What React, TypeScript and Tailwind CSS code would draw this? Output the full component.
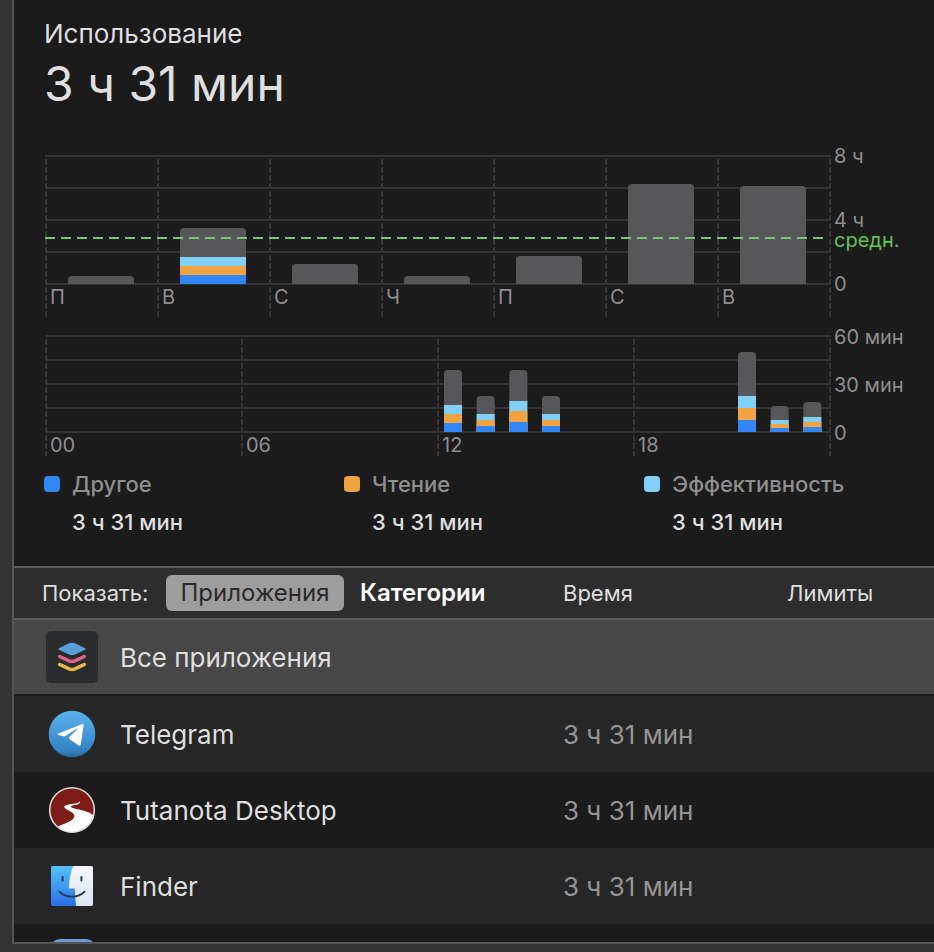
import { useState, type ReactNode } from "react";

const BLUE = "#3287f7";
const ORANGE = "#f2a341";
const SKY = "#82cff8";
const GRAY = "#575759";
const GRID = "#343434";

/* stack: heights above the baseline of the blue, orange and sky segments */
type Bar = { slot: number; height: number; stack?: [number, number, number] };

type ChartProps = {
  label: string;
  plot: number;
  step: number;
  footer: number;
  slots: number;
  barWidth: number;
  barOffset: number;
  ticks: string[];
  bars: Bar[];
  average?: number;
  children: ReactNode;
};

const pct = (n: number) => `${n * 100}%`;

function Chart({ label, plot, step, footer, slots, barWidth, barOffset, ticks, bars, average, children }: ChartProps) {
  const rows = Array.from({ length: plot / step + 1 }, (_, i) => i * step);
  return (
    <div className="flex gap-1">
      <div className="min-w-0 flex-1">
        <svg role="img" aria-label={label} className="block w-full overflow-visible" height={plot + footer}>
          {rows.map((y) => (
            <line key={y} x1="0" x2="100%" y1={y + 1} y2={y + 1} stroke={GRID} strokeWidth="2" strokeLinecap="square" />
          ))}
          {Array.from({ length: ticks.length + 1 }, (_, i) => (
            <line
              key={i}
              x1={pct(i / ticks.length)}
              x2={pct(i / ticks.length)}
              y1="4"
              y2={plot + footer}
              stroke={GRID}
              strokeWidth="2"
              strokeDasharray="6 2"
            />
          ))}
          <svg x="0" y="0" width="100%" height={plot + 1}>
            {bars.map((b) => {
              const x = pct((b.slot + barOffset) / slots);
              const w = pct(barWidth / slots);
              const base = plot + 1;
              return (
                <g key={b.slot}>
                  <rect x={x} width={w} y={base - b.height} height={b.height + 8} rx={4} fill={GRAY} />
                  {b.stack && (
                    <>
                      <rect x={x} width={w} y={base - b.stack[2]} height={b.stack[2]} fill={SKY} />
                      <rect x={x} width={w} y={base - b.stack[1]} height={b.stack[1]} fill={ORANGE} />
                      <rect x={x} width={w} y={base - b.stack[0]} height={b.stack[0]} fill={BLUE} />
                    </>
                  )}
                </g>
              );
            })}
          </svg>
          {average !== undefined && (
            <line x1="-1" x2="99.5%" y1={average} y2={average} stroke="#7cc576" strokeWidth="2" strokeDasharray="10 6" />
          )}
          {ticks.map((t, i) => (
            <svg key={i} x={pct(i / ticks.length)} y={plot} overflow="visible">
              <text x="4" y="21" fontSize="20" fill="#8e8e8e">
                {t}
              </text>
            </svg>
          ))}
        </svg>
      </div>
      <div className="w-21 shrink-0 text-xl leading-5 whitespace-nowrap text-[#8e8e8e]">{children}</div>
    </div>
  );
}

function Legend({ swatch, name }: { swatch: string; name: string }) {
  return (
    <div className="w-[300px] shrink-0">
      <dt className="flex h-8 items-center gap-3 text-[#8e8e8e]">
        <span className={`size-4 rounded ${swatch}`} />
        {name}
      </dt>
      <dd className="mt-2 pl-7 leading-7 text-[#dfdfdf]">3 ч 31 мин</dd>
    </div>
  );
}

function AllAppsIcon() {
  return (
    <svg className="size-[52px]" viewBox="0 0 52 52" aria-hidden="true">
      <rect width="52" height="52" rx="5" fill="#2a2b2d" />
      <g fill="none" strokeWidth="3.6" strokeLinecap="round">
        <path d="M13.8 33.5L22.6 37.7Q26 39.2 29.4 37.7L38.2 33.5" stroke="#edb748" />
        <path d="M13.8 25.5L22.6 29.7Q26 31.2 29.4 29.7L38.2 25.5" stroke="#e0608a" />
      </g>
      <path d="M13.4 16.9L23 12.3Q26 11 29 12.3L38.6 16.9Q40.6 18 38.6 19.1L29 23.6Q26 24.9 23 23.6L13.4 19.1Q11.4 18 13.4 16.9Z" fill="#5b9fd8" />
    </svg>
  );
}

function TelegramIcon() {
  return (
    <svg className="size-[52px]" viewBox="0 0 52 52" aria-hidden="true">
      <defs>
        <linearGradient id="tg" x1="0" y1="0" x2="0" y2="1">
          <stop offset="0" stopColor="#58b2ee" />
          <stop offset="0.85" stopColor="#3583c2" />
          <stop offset="1" stopColor="#28689c" />
        </linearGradient>
      </defs>
      <circle cx="26" cy="26" r="23.3" fill="url(#tg)" />
      <path d="M11.8 25.7L36.2 15.9Q37.8 15.4 37.6 17.2L34.8 36.4Q34.4 38.6 32.6 37.4L23.2 30.8Q22.4 30 23.2 29.2L31.6 20.8Q31.8 20.2 31 20.6L19.4 28Q18.4 28.6 17.4 28.3L11.8 26.8Q10.8 26.3 11.8 25.7Z" fill="#fff" />
    </svg>
  );
}

function TutanotaIcon() {
  return (
    <svg className="size-[52px]" viewBox="0 0 52 52" aria-hidden="true">
      <circle cx="26" cy="26" r="22.2" fill="#7d1b17" />
      <path d="M12.2 42.3C19 39.2 28.8 36.8 28.4 31.5C28 27.8 19.5 26 18.3 23.3C17.2 20.6 25 20 29.4 19.4C31.8 19.1 33.4 18.5 33.8 17.2C34.8 19.4 32 20.4 29.6 20.8C26 21.4 24.6 21.8 25 23C26 25 43 26 48 32C46 42 37 48.4 26 48.4C20 48.4 15 46 12.2 42.3Z" fill="#fff" />
      <circle cx="26" cy="26" r="22.3" fill="none" stroke="#dad8d7" strokeWidth="1.6" />
    </svg>
  );
}

function FinderIcon() {
  return (
    <svg className="size-[52px]" viewBox="0 0 52 52" aria-hidden="true">
      <defs>
        <linearGradient id="fl" x1="0" y1="0" x2="0" y2="1">
          <stop offset="0" stopColor="#56c3f6" />
          <stop offset="1" stopColor="#2a6ee8" />
        </linearGradient>
        <linearGradient id="fr" x1="0" y1="0" x2="0" y2="1">
          <stop offset="0" stopColor="#f4f5f8" />
          <stop offset="1" stopColor="#dde6f5" />
        </linearGradient>
      </defs>
      <rect x="5" y="6" width="42" height="40" rx="2" fill="url(#fl)" />
      <path d="M27.4 6H45Q47 6 47 8V44Q47 46 45 46H30.2Q29 39 29 29.6Q29 28.6 28 28.6H23.8Q22.6 28.6 22.8 27.4Q23.6 14 27.4 6Z" fill="url(#fr)" />
      <path d="M16.6 17V20.4M35.4 17V20.4" stroke="#1f3a58" strokeWidth="2" strokeLinecap="round" />
      <path d="M13.4 31.6C20 38.4 32 38.4 38.6 31.6" fill="none" stroke="#22344f" strokeWidth="1.8" strokeLinecap="round" />
    </svg>
  );
}

const apps = [
  { name: "Telegram", icon: <TelegramIcon /> },
  { name: "Tutanota Desktop", icon: <TutanotaIcon /> },
  { name: "Finder", icon: <FinderIcon /> },
];

const week: Bar[] = [
  { slot: 0, height: 8 },
  { slot: 1, height: 56, stack: [9, 18, 27] },
  { slot: 2, height: 20 },
  { slot: 3, height: 8 },
  { slot: 4, height: 28 },
  { slot: 5, height: 100 },
  { slot: 6, height: 98 },
];

const day: Bar[] = [
  { slot: 12, height: 62, stack: [9, 18, 27] },
  { slot: 13, height: 36, stack: [6, 12, 18] },
  { slot: 14, height: 62, stack: [10, 21, 31] },
  { slot: 15, height: 36, stack: [6, 12, 18] },
  { slot: 21, height: 80, stack: [12, 24, 36] },
  { slot: 22, height: 26, stack: [4, 8, 12] },
  { slot: 23, height: 30, stack: [5, 10, 15] },
];

export default function App() {
  const [tab, setTab] = useState<"apps" | "categories">("apps");
  const on = "bg-[#9d9d9d] text-[#2a2a2a]";
  const off = "font-semibold text-white";
  return (
    <div className="h-screen overflow-hidden bg-[#333333] pb-2 pl-3 font-[Inter,'Liberation_Sans',sans-serif] text-[#dfdfdf]">
      <main className="flex h-full flex-col overflow-hidden border-b-2 border-l-2 border-[#555555] bg-[#1b1b1b]">
        <section className="pt-4 pr-4 pl-[30px]">
          <h1 className="text-[26px] leading-9">Использование</h1>
          <p className="text-5xl leading-16">3 ч 31 мин</p>

          <div className="mt-[39px] pl-[2px]">
            <Chart
              label="Использование по дням недели"
              plot={128}
              step={32}
              footer={34}
              slots={7}
              barWidth={66 / 112}
              barOffset={22 / 112}
              ticks={["П", "В", "С", "Ч", "П", "С", "В"]}
              bars={week}
              average={83}
            >
              <div className="-mt-[9px] flex h-37 flex-col">
                <span className="mb-11">8 ч</span>
                <span>4 ч</span>
                <span className="text-[#65c257]">средн.</span>
                <span className="mt-auto">0</span>
              </div>
            </Chart>
          </div>
          <div className="mt-[18px] pl-[2px]">
            <Chart
              label="Использование по часам"
              plot={96}
              step={24}
              footer={25}
              slots={24}
              barWidth={18 / 32.667}
              barOffset={6 / 32.667}
              ticks={["00", "06", "12", "18"]}
              bars={day}
            >
              <div className="-mt-2 flex h-29 flex-col justify-between">
                <span>60 мин</span>
                <span>30 мин</span>
                <span>0</span>
              </div>
            </Chart>
          </div>

          <dl className="mt-3 flex h-[98px] text-[22px] font-medium">
            <Legend swatch="bg-[#3287f7]" name="Другое" />
            <Legend swatch="bg-[#f2a341]" name="Чтение" />
            <Legend swatch="bg-[#82cff8]" name="Эффективность" />
          </dl>
        </section>

        <table className="w-full table-fixed border-separate border-spacing-0 text-left text-[26px]">
          <colgroup>
            <col className="w-[549px]" />
            <col className="w-[224px]" />
            <col />
          </colgroup>
          <thead className="bg-[#2d2d2d] text-[22px]">
            <tr className="h-[54px]">
              <th className="border-y-2 border-[#5c5c5c] p-0 pl-7 font-normal">
                <div className="flex items-center">
                  <span className="w-[124px]">Показать:</span>
                  <button
                    type="button"
                    aria-pressed={tab === "apps"}
                    onClick={() => setTab("apps")}
                    className={`h-9 w-[178px] rounded-md text-2xl ${tab === "apps" ? on : off}`}
                  >
                    Приложения
                  </button>
                  <button
                    type="button"
                    aria-pressed={tab === "categories"}
                    onClick={() => setTab("categories")}
                    className={`h-9 rounded-md px-4 text-2xl ${tab === "categories" ? on : off}`}
                  >
                    Категории
                  </button>
                </div>
              </th>
              <th className="border-y-2 border-[#5c5c5c] p-0 font-normal">Время</th>
              <th className="border-y-2 border-[#5c5c5c] p-0 font-normal">Лимиты</th>
            </tr>
          </thead>
          <tbody>
            <tr className="h-[76px] bg-[#474747]">
              <td colSpan={3} className="border-b-2 border-[#1b1b1b] p-0 pl-8">
                <div className="flex items-center gap-[22px]">
                  <AllAppsIcon />
                  Все приложения
                </div>
              </td>
            </tr>
            {apps.map((a) => (
              <tr key={a.name} className="h-[76px] odd:bg-[#1b1b1b] even:bg-[#262626]">
                <td className="p-0 pl-8">
                  <div className="flex items-center gap-[22px]">
                    {a.icon}
                    {a.name}
                  </div>
                </td>
                <td className="p-0 text-[#949494]">3 ч 31 мин</td>
                <td className="p-0" />
              </tr>
            ))}
            <tr className="h-[76px]">
              <td colSpan={3} className="p-0 pl-9">
                <div className="size-[46px] rounded-[10px] bg-[#6d97d6]" />
              </td>
            </tr>
          </tbody>
        </table>
      </main>
    </div>
  );
}
